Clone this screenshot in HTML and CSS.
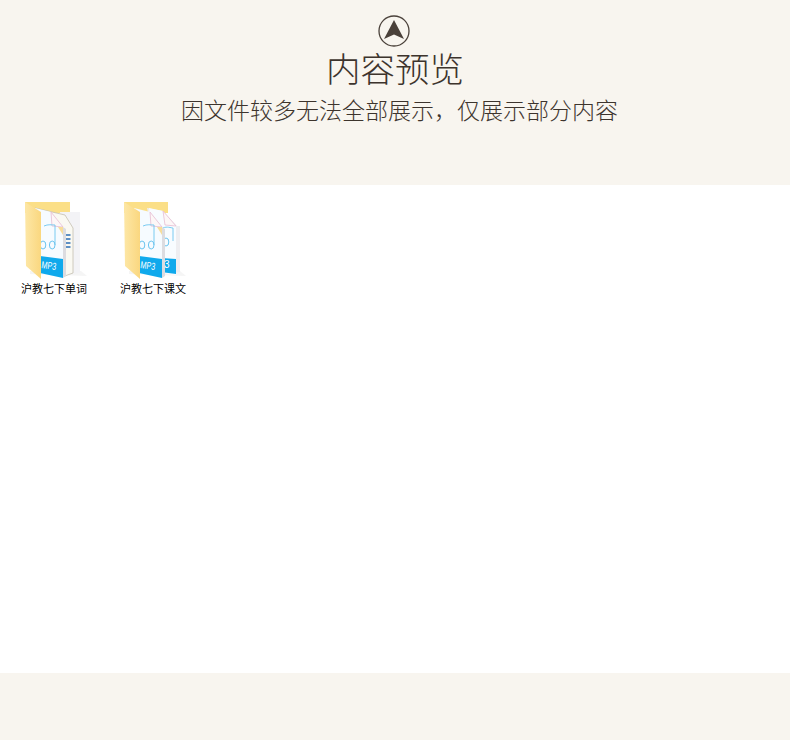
FILE: index.html
```html
<!DOCTYPE html>
<html lang="zh">
<head>
<meta charset="utf-8">
<title>内容预览</title>
<link rel="stylesheet" href="styles.css">
</head>
<body>
<header class="head">
  <svg class="badge" width="32" height="32" viewBox="0 0 32 32">
    <circle cx="16" cy="16" r="15" fill="none" stroke="#4a413a" stroke-width="1.3"/>
    <path d="M16 5 L26 24 L16 19.500 L6 24 Z" fill="#4a413a"/>
  </svg>
  <h1 class="title">内容预览</h1>
  <p class="sub">因文件较多无法全部展示，仅展示部分内容</p>
</header>
<main class="content">
  <figure class="item">
    <svg class="folder" width="70" height="84" viewBox="0 0 70 84">
      <defs><linearGradient id="fl1" x1="0" y1="0" x2="1" y2="0"><stop offset="0" stop-color="#fde7a6"/><stop offset="1" stop-color="#fad77f"/></linearGradient></defs>
      <path d="M5 4H50V15H5Z" fill="#fbdf87"/>
      <path d="M10 76L67 78L61 73H10Z" fill="#eeeeee" opacity=".6"/>
      <path d="M40 14H60V75L44 77Z" fill="#f3f3f6"/>
      <path d="M15 10L45 17L53 30V75L42 79Z" fill="#faf9f2" stroke="#c4bfb0" stroke-width=".8"/>
      <path d="M45 37H50.500M45 41H50.500M45 45H50.500M45 49H50.500" stroke="#2b6db5" stroke-width="1.500"/>
      <path d="M15 10L31 14L43 29V80L15 74Z" fill="#f6fbff"/>
      <path d="M31 14L43 29L32 28Z" fill="#fdf7f7" stroke="#e6bcd2" stroke-width=".8"/>
      <path d="M38 29L43 37V29Z" fill="#f7dd9a"/>
      <path d="M24 28C28 26 32 27 35 27V47" fill="none" stroke="#6cc5ef" stroke-width=".9"/>
      <ellipse cx="23" cy="47" rx="2.800" ry="4" fill="none" stroke="#6cc5ef" stroke-width="1"/>
      <ellipse cx="32.200" cy="47" rx="2.800" ry="4" fill="none" stroke="#6cc5ef" stroke-width="1"/>
      <path d="M20 58L43 61V80L20 75Z" fill="#0fa9ec"/>
      <text class="mp3" x="21" y="70" textLength="15" lengthAdjust="spacingAndGlyphs" transform="rotate(8 21 70)">MP3</text>
      <path d="M43 29V80L46 78V31Z" fill="#dcdce0"/>
      <path d="M5 4L21 14V81L6 68Z" fill="url(#fl1)"/>
    </svg>
    <figcaption class="label">沪教七下单词</figcaption>
  </figure>
  <figure class="item">
    <svg class="folder" width="70" height="84" viewBox="0 0 70 84">
      <defs><linearGradient id="fl2" x1="0" y1="0" x2="1" y2="0"><stop offset="0" stop-color="#fde7a6"/><stop offset="1" stop-color="#fad77f"/></linearGradient></defs>
      <path d="M5 4H49V15H5Z" fill="#fbdf87"/>
      <path d="M10 76L67 78L61 73H10Z" fill="#eeeeee" opacity=".6"/>
      <path d="M28 10L44 13L58 28H61V74L42 77Z" fill="#eeeef1"/>
      <path d="M30 10L44 13L57 28V77L40 75Z" fill="#f8fcff"/>
      <path d="M44 13L57 28L46 27Z" fill="#fdf7f7" stroke="#e6bcd2" stroke-width=".8"/>
      <path d="M44 30C48 28 52 30 54 30V43" fill="none" stroke="#6cc5ef" stroke-width=".9"/>
      <ellipse cx="47" cy="44" rx="2.800" ry="4" fill="none" stroke="#6cc5ef" stroke-width="1"/>
      <path d="M42 60L57 61V76L42 74Z" fill="#0fa9ec"/>
      <text class="mp3" x="45" y="70">3</text>
      <path d="M15 10L31 14L43 29V80L15 74Z" fill="#f6fbff"/>
      <path d="M31 14L43 29L32 28Z" fill="#fdf7f7" stroke="#e6bcd2" stroke-width=".8"/>
      <path d="M38 29L43 37V29Z" fill="#f7dd9a"/>
      <path d="M24 28C28 26 32 27 35 27V47" fill="none" stroke="#6cc5ef" stroke-width=".9"/>
      <ellipse cx="23" cy="47" rx="2.800" ry="4" fill="none" stroke="#6cc5ef" stroke-width="1"/>
      <ellipse cx="32.200" cy="47" rx="2.800" ry="4" fill="none" stroke="#6cc5ef" stroke-width="1"/>
      <path d="M20 58L43 61V80L20 75Z" fill="#0fa9ec"/>
      <text class="mp3" x="21" y="70" textLength="15" lengthAdjust="spacingAndGlyphs" transform="rotate(8 21 70)">MP3</text>
      <path d="M43 29V80L46 78V31Z" fill="#dcdce0"/>
      <path d="M5 4L21 14V81L6 68Z" fill="url(#fl2)"/>
    </svg>
    <figcaption class="label">沪教七下课文</figcaption>
  </figure>
</main>
<footer class="foot"></footer>
</body>
</html>
```

FILE: styles.css
```css
html, body {
  margin: 0;
  padding: 0;
  background: #f8f5ef;
}
body {
  width: 790px;
  height: 740px;
  overflow: hidden;
  font-family: "Noto Sans CJK SC", "Liberation Sans", sans-serif;
  color: #3d342d;
}
.head {
  height: 185px;
  box-sizing: border-box;
  padding-top: 15px;
  display: flex;
  flex-direction: column;
  align-items: center;
  background: #f8f5ef;
}
.badge {
  display: block;
  flex: none;
  margin-right: 3px;
}
.title {
  margin: 0;
  font-size: 34.5px;
  font-weight: 300;
  line-height: 40px;
}
.sub {
  margin: 0;
  padding: 6px 0 0 9px;
  font-size: 23px;
  font-weight: 300;
  line-height: 32px;
}
.content {
  height: 488px;
  box-sizing: border-box;
  background: #fff;
  padding: 13px 0 0 20px;
  display: flex;
  align-items: flex-start;
  gap: 29px;
}
.item {
  margin: 0;
  width: 70px;
  display: flex;
  flex-direction: column;
  align-items: center;
}
.folder {
  display: block;
}
.label {
  margin: -1px 2px 0 0;
  font-size: 11px;
  font-weight: 400;
  line-height: 14px;
  color: #000;
  white-space: nowrap;
}
.mp3 {
  font-family: "Liberation Sans", sans-serif;
  font-size: 10px;
  fill: #fff;
}
.foot {
  height: 67px;
  background: #f8f5ef;
}
```
